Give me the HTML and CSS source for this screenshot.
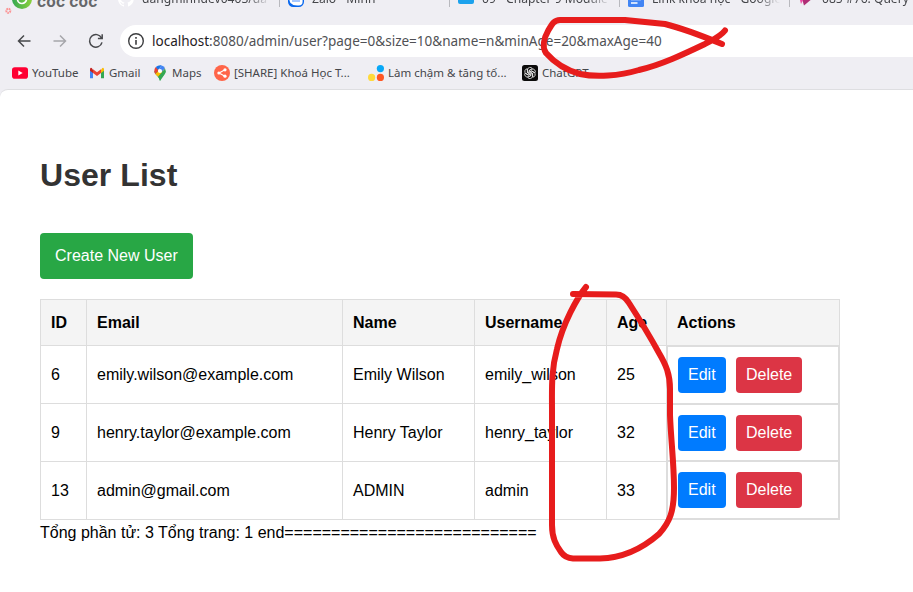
FILE: index.html
```html
<!DOCTYPE html>
<html lang="vi">
<head>
<meta charset="utf-8">
<title>User List</title>
<link rel="stylesheet" href="styles.css">
</head>
<body>
<header class="browser">
  <div class="tabs">
    <div class="brand">
      <svg width="118" height="16" viewBox="0 0 118 16">
        <defs><linearGradient id="coc"><stop offset="0" stop-color="#35a853"/><stop offset="1" stop-color="#8bd13c"/></linearGradient></defs>
        <circle cx="22" cy="-1" r="10" fill="url(#coc)"/>
        <circle cx="22" cy="-1" r="4.5" fill="none" stroke="#fff" stroke-width="1.7"/>
        <circle cx="8.3" cy="10.8" r="2" fill="none" stroke="#fb9495" stroke-width="2" stroke-dasharray="1.6 .6"/>
      </svg>
      <span class="brand-name">cốc cốc</span>
    </div>
    <div class="tab">
      <svg class="tab-icon" width="16" height="16" viewBox="0 0 16 16"><path fill="#fff" d="M8 0a8 8 0 0 0-2.5 15.6c.4.1.5-.2.5-.4v-1.5c-2.2.5-2.7-1-2.7-1-.4-.9-.9-1.200-.9-1.200-.7-.5.1-.5.1-.5.8.1 1.200.8 1.200.8.7 1.200 1.900.9 2.300.7.1-.5.3-.9.5-1.100-1.800-.2-3.600-.9-3.600-3.900 0-.9.3-1.600.8-2.100-.1-.2-.4-1 .1-2.100 0 0 .7-.2 2.200.8a7.500 7.500 0 0 1 4 0c1.500-1 2.200-.8 2.200-.8.4 1.100.2 1.900.1 2.100.5.6.8 1.300.8 2.100 0 3.100-1.900 3.700-3.700 3.900.3.3.6.8.6 1.500v2.200c0 .2.1.5.5.4A8 8 0 0 0 8 0z"/></svg>
      <span class="tab-title">dangminhdev0403/da</span>
    </div>
    <div class="tab">
      <svg class="tab-icon" width="16" height="16" viewBox="0 0 16 16"><rect x=".7" y=".7" width="14.600" height="14.600" rx="4.500" fill="#fff" stroke="#0867ee" stroke-width="1.400"/><path d="M1 9v3q0 3 4 3h7q-6 0-8-2-2-1-3-4z" fill="#0867ee"/><path d="M4 10h8" stroke="#4f91ff"/></svg>
      <span class="tab-title">Zalo - Minh</span>
    </div>
    <div class="tab">
      <svg class="tab-icon" width="16" height="16" viewBox="0 0 16 16"><rect y="3" width="16" height="10" rx="2" fill="#1ca2ed"/></svg>
      <span class="tab-title">09 - Chapter 9 Module</span>
    </div>
    <div class="tab">
      <svg class="tab-icon" width="16" height="16" viewBox="0 0 16 16"><rect width="16" height="16" rx="1.500" fill="#4285f4"/><path d="M3 8.500h10M3 12h6.500" stroke="#fff" stroke-width="1.500"/></svg>
      <span class="tab-title">Link khoá học - Google</span>
    </div>
    <div class="tab">
      <svg class="tab-icon" width="16" height="16" viewBox="0 0 16 16"><path d="M4 8l11-1-9 7.500z" fill="#b02d75"/><path d="M1 5l4 4-2 4z" fill="#ef4aa5"/></svg>
      <span class="tab-title">085 #76. Query</span>
    </div>
  </div>

  <div class="toolbar">
    <svg class="nav" width="16" height="16" viewBox="0 0 16 16"><path d="M14.500 8H2.500M8 2.500L2.500 8 8 13.500" fill="none" stroke="#47484b" stroke-width="1.500"/></svg>
    <svg class="nav" width="16" height="16" viewBox="0 0 16 16"><path d="M1.500 8h12M8 2.500L13.500 8 8 13.500" fill="none" stroke="#a6a6ab" stroke-width="1.500"/></svg>
    <svg class="nav" width="16" height="16" viewBox="0 0 16 16"><path d="M14 9.300A6.300 6.300 0 1 1 13.500 5M14.200 1.200v4.300H9.900" fill="none" stroke="#47484b" stroke-width="1.500"/></svg>
    <div class="address">
      <svg width="18" height="18" viewBox="0 0 18 18"><circle cx="9" cy="9" r="7.300" fill="none" stroke="#3d3e40" stroke-width="1.400"/><path d="M9 8v4.800M9 5v1.700" stroke="#3d3e40" stroke-width="1.600"/></svg>
      <span class="url"><b>localhost</b>:8080/admin/user?page=0&amp;size=10&amp;name=n&amp;minAge=20&amp;maxAge=40</span>
    </div>
  </div>

  <nav class="bookmarks">
    <span class="bookmark bm-youtube"><svg width="16" height="16" viewBox="0 0 16 16"><rect y="2.300" width="16" height="11.400" rx="2.800" fill="#ff0033"/><path d="M6.300 5.500v5L10.700 8z" fill="#fff"/></svg><span>YouTube</span></span>
    <span class="bookmark bm-gmail"><svg width="16" height="16" viewBox="0 0 16 16"><path d="M1 4v9.200h3V7z" fill="#4285f4"/><path d="M15 4v9.200h-3V7z" fill="#34a853"/><path d="M12 4.800L13.300 3Q15 2.200 15 4.500v1.300l-3 2.200z" fill="#fbbc04"/><path d="M4 4.800L2.700 3Q1 2.200 1 4.500v1.300L4 8z" fill="#c5221f"/><path d="M4 4.300l4 3 4-3V8l-4 3-4-3z" fill="#ea4335"/></svg><span>Gmail</span></span>
    <span class="bookmark bm-maps"><svg width="16" height="16" viewBox="0 0 16 16"><path d="M2.300 6C2.300 9.500 7 11 8 16c1-5 5.700-6.500 5.700-10.300z" fill="#34a853"/><path d="M3.200 9L10 2l3 1-6.500 9.200Q5 10.500 3.200 9z" fill="#fbbc04"/><path d="M8 9.500L13 3.500Q14.500 7 12.700 9.200L8 16Q7.500 13 6 11.800z" fill="#34a853"/><path d="M2.300 6Q2.300 3.700 3.800 2.100L7 5 3.200 9Q2.300 7.500 2.300 6z" fill="#ea4335"/><path d="M3.800 2.100Q6 0 8.800.2L9.700.4 6 5z" fill="#1a73e8"/><path d="M9.700.4Q12 1 13 3.300L9.500 7 7 4z" fill="#4285f4"/><circle cx="8" cy="6" r="2.100" fill="#fff"/></svg><span>Maps</span></span>
    <span class="bookmark bm-share"><svg width="16" height="16" viewBox="0 0 16 16"><circle cx="8" cy="8" r="8" fill="#ff6549"/><path d="M11 4.800L5 8l6 3.200" fill="none" stroke="#fff" stroke-width="1.100"/><g fill="#fff"><circle cx="11" cy="4.800" r="1.600"/><circle cx="4.900" cy="8" r="1.600"/><circle cx="11" cy="11.200" r="1.600"/></g></svg><span>[SHARE] Khoá Học T...</span></span>
    <span class="bookmark bm-slow"><svg width="16" height="16" viewBox="0 0 16 16"><circle cx="12.400" cy="3.600" r="3.600" fill="#08a8f7"/><circle cx="3.600" cy="12.400" r="3.600" fill="#ffda3c"/><circle cx="12.400" cy="12.400" r="3.600" fill="#ff5724"/></svg><span>Làm chậm &amp; tăng tố...</span></span>
    <span class="bookmark bm-gpt"><svg width="16" height="16" viewBox="0 0 16 16"><rect width="16" height="16" rx="2.500" fill="#0b0b0b"/><g fill="none" stroke="#e8e8e8" stroke-width=".8"><path id="petal" d="M5.500 8V4.800a2.600 2.600 0 0 1 4.800-1.200L7 5.500v4"/><use href="#petal" transform="rotate(60 8 8)"/><use href="#petal" transform="rotate(120 8 8)"/><use href="#petal" transform="rotate(180 8 8)"/><use href="#petal" transform="rotate(240 8 8)"/><use href="#petal" transform="rotate(300 8 8)"/></g></svg><span>ChatGPT</span></span>
  </nav>
</header>

<main class="page">
  <h1>User List</h1>
  <a class="btn create">Create New User</a>
  <table class="users">
    <colgroup><col class="c-id"><col class="c-email"><col class="c-name"><col class="c-username"><col class="c-age"><col class="c-actions"></colgroup>
    <thead><tr><th>ID</th><th>Email</th><th>Name</th><th>Username</th><th>Age</th><th>Actions</th></tr></thead>
    <tbody>
      <tr><td>6</td><td>emily.wilson@example.com</td><td>Emily Wilson</td><td>emily_wilson</td><td>25</td><td class="actions"><div class="action-box"><a class="btn edit">Edit</a><a class="btn delete">Delete</a></div></td></tr>
      <tr><td>9</td><td>henry.taylor@example.com</td><td>Henry Taylor</td><td>henry_taylor</td><td>32</td><td class="actions"><div class="action-box"><a class="btn edit">Edit</a><a class="btn delete">Delete</a></div></td></tr>
      <tr><td>13</td><td>admin@gmail.com</td><td>ADMIN</td><td>admin</td><td>33</td><td class="actions"><div class="action-box"><a class="btn edit">Edit</a><a class="btn delete">Delete</a></div></td></tr>
    </tbody>
  </table>
  <div class="summary">Tổng phần tử: 3 Tổng trang: 1 end===========================</div>
</main>

<svg class="marks" width="913" height="592" viewBox="0 0 913 592">
  <path d="M725 30.500C720 37 712 40 705 44C684 54 661 65 639 70C619 76 596 77.500 580 74C565 70 553 61 546 53C542 47 544 38 548 31C552 24 554 20 560 20H625L665 24C685 29 700 35 722 44"/>
  <path d="M586 287C577 298 563 323 557 349C551 371 552 389 552 410V525C552 538 556 545 561 552Q565 558 573 558.500H600C623 558 643 548 659 534C670 522 674 511 674 488C674 463 671 441 670 415V389C670 374 666 365 659 353C648 333 638 317 629 303Q624 294.500 616 294.500L573 294"/>
</svg>
</body>
</html>
```
FILE: styles.css
```css
* { box-sizing: border-box; }
body {
  margin: 0;
  width: 913px;
  height: 592px;
  overflow: hidden;
  position: relative;
  background: #fff;
  color: #000;
  font: 16px/18px "Liberation Sans", Arial, sans-serif;
}
svg { flex: none; display: block; }

.browser {
  height: 95px;
  background: #efeef3;
  color: #45464a;
  font-family: "Noto Sans", sans-serif;
}
.tabs {
  height: 25px;
  display: grid;
  grid-template-columns: 110px repeat(5, 170px);
  align-items: start;
  overflow: hidden;
}
.brand { display: flex; }
.brand svg { margin-right: -81px; }
.brand-name {
  margin-top: -7px;
  color: #66676a;
  font: bold 15.5px/18px Inter, sans-serif;
  letter-spacing: .2px;
  white-space: nowrap;
}
.tab {
  display: flex;
  gap: 8px;
  height: 7px;
  padding-left: 8px;
  border-right: 1px solid #b9b9be;
}
.tab-icon { margin-top: -9px; }
.tab-title {
  width: 128px;
  height: 28px;
  margin-top: -11px;
  font-size: 12.1px;
  line-height: 20px;
  white-space: nowrap;
  overflow: hidden;
  -webkit-mask-image: linear-gradient(90deg, #000 82%, transparent);
  mask-image: linear-gradient(90deg, #000 82%, transparent);
}

.toolbar {
  height: 32px;
  display: flex;
  align-items: center;
  gap: 20px;
  padding-left: 16px;
}
.address {
  flex: 1;
  height: 32px;
  margin-left: -4px;
  padding-left: 7px;
  display: flex;
  align-items: center;
  gap: 7px;
  border-radius: 16px 0 0 16px;
  background: #fff;
}
.url { font-size: 13.53px; white-space: nowrap; color: #505155; }
.url b { font-weight: 400; color: #1f2023; }

.bookmarks {
  height: 32px;
  display: grid;
  grid-template-columns: 77px 63px 62px 154px 154px 100px;
  align-items: center;
  padding-left: 12px;
  font-size: 11.5px;
}
.bookmark { display: flex; align-items: center; gap: 4px; white-space: nowrap; }

.page {
  height: 503px;
  margin-top: -6px;
  padding: 67px 40px 0;
  border-top: 1px solid #dedee1;
  border-radius: 8px 0 0 0;
  background: #fff;
}
h1 {
  margin: 0 0 39px;
  font-size: 32px;
  line-height: 37px;
  letter-spacing: .05px;
  color: #333;
}
.btn { display: inline-block; color: #fff; border-radius: 4px; }
.create { display: block; width: 153px; height: 46px; padding: 14px 15px; background: #28a745; }
.users {
  width: 800px;
  margin-top: 20px;
  table-layout: fixed;
  border-collapse: separate;
  border-spacing: 0;
  border-top: 1px solid #ddd;
}
.c-id { width: 47px; }
.c-email { width: 256px; }
.c-name { width: 132px; }
.c-username { width: 132px; }
.c-age { width: 60px; }
.c-actions { width: 173px; }
th, td {
  height: 58px;
  padding: 0 10px;
  text-align: left;
  border-right: 1px solid #ddd;
  border-bottom: 1px solid #ddd;
}
th { height: 46px; background: #f4f4f4; }
th:first-child, td:first-child { border-left: 1px solid #ddd; }
.actions { padding: 0; }
.action-box {
  height: 57px;
  display: flex;
  align-items: center;
  gap: 10px;
  padding-left: 10px;
  border: 1px solid #ddd;
}
tr:first-child .action-box { border-bottom: 0; }
tr:last-child .action-box { border-top: 0; }
.edit, .delete { height: 36px; padding: 9px 10px; }
.edit { width: 48px; background: #007bff; }
.delete { width: 66px; background: #dc3545; }
.summary { margin-top: 4px; white-space: nowrap; }

.marks {
  position: absolute;
  top: 0;
  left: 0;
  fill: none;
  stroke: #e71c1c;
  stroke-width: 6;
  stroke-linecap: round;
  stroke-linejoin: round;
}
```
